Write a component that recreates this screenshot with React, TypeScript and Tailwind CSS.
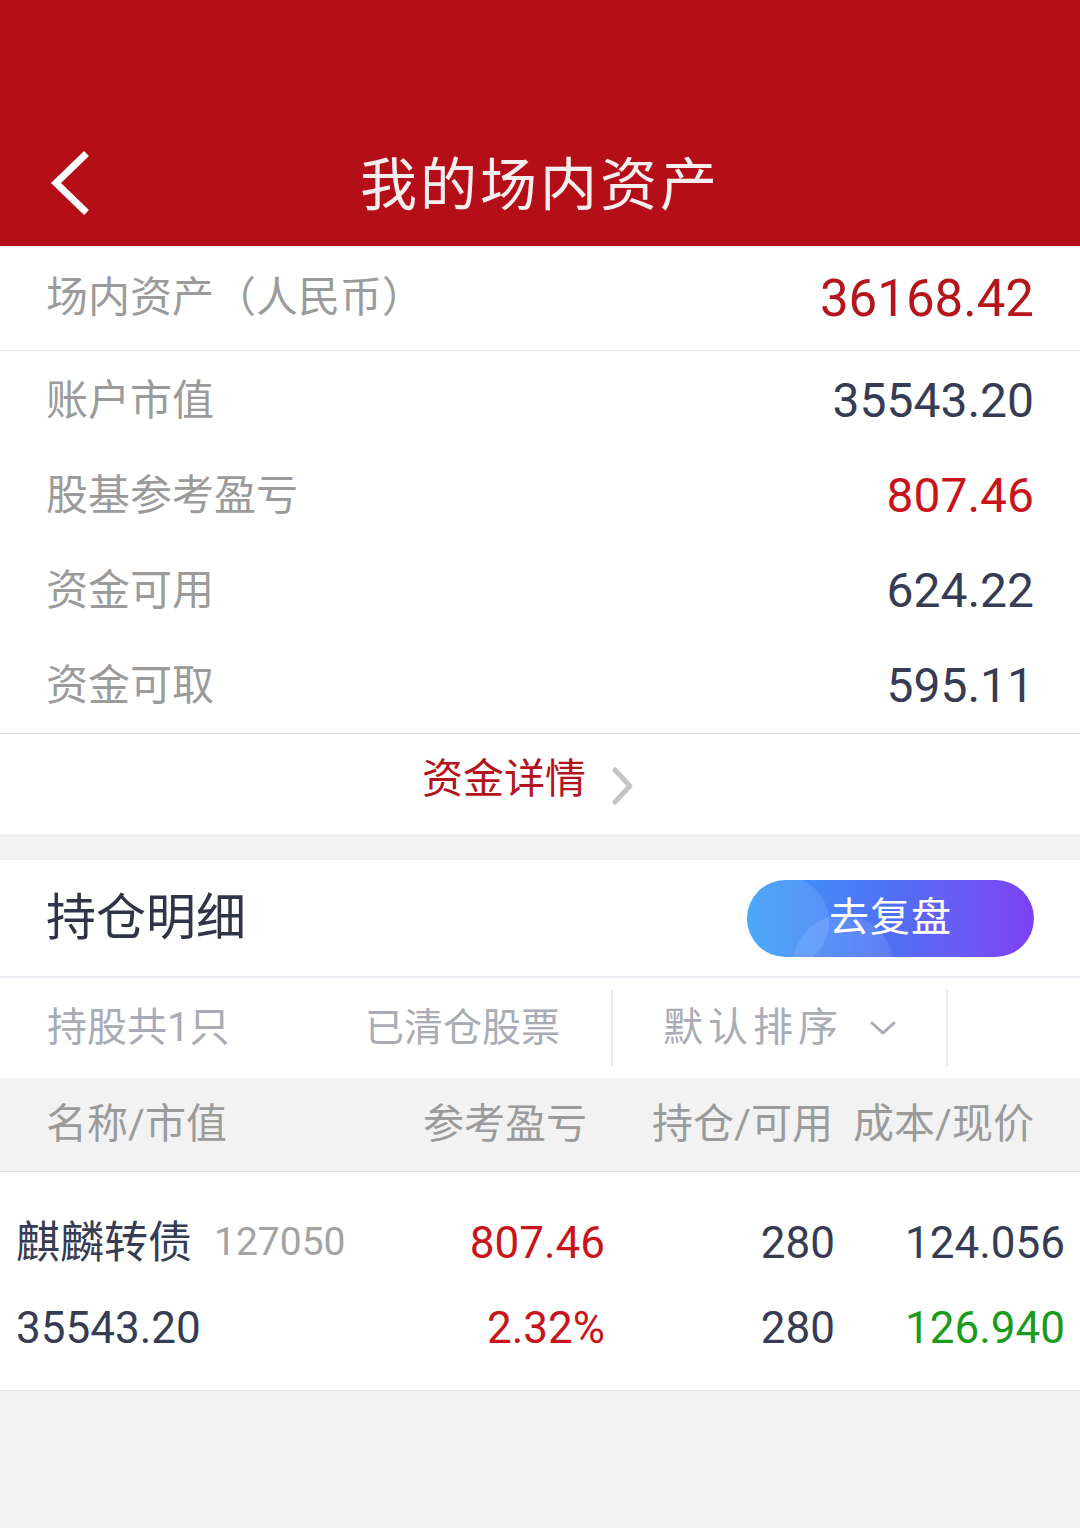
import React from "react";

const FONT = { fontFamily: "Roboto, 'Noto Sans CJK SC', 'Noto Sans', sans-serif" };

function InfoRow({ label, value, red }: { label: string; value: string; red?: boolean }) {
  return (
    <div className="flex h-[95px] items-center justify-between pl-[46px] pr-[46px]">
      <span className="text-[42px] leading-none text-[#9b9b9b]">{label}</span>
      <span className={`text-[48px] leading-none ${red ? "text-[#c8151b]" : "text-[#363c54]"}`}>{value}</span>
    </div>
  );
}

export default function App() {
  return (
    <div className="min-h-[1528px] w-[1080px] bg-[#f2f2f2]" style={FONT}>
      {/* Header */}
      <div className="relative flex h-[246px] items-center justify-center bg-[#b40f18] pt-[125px]">
        <svg className="absolute left-[44px] top-[150px]" width="50" height="66" viewBox="0 0 50 66">
          <path d="M40 6 L12 33 L40 60" fill="none" stroke="#ffffff" strokeWidth="7" strokeLinecap="square" />
        </svg>
        <span className="text-[57px] leading-none tracking-[3px] text-[#f7eeee]">我的场内资产</span>
      </div>

      {/* Assets */}
      <div className="bg-white">
        <div className="flex h-[105px] items-center justify-between border-b border-[#e3e3e3] px-[46px]">
          <span className="text-[42px] leading-none text-[#9b9b9b]">场内资产（人民币）</span>
          <span className="text-[51px] leading-none text-[#b5161c]">36168.42</span>
        </div>
        <div className="pt-[2px]">
          <InfoRow label="账户市值" value="35543.20" />
          <InfoRow label="股基参考盈亏" value="807.46" red />
          <InfoRow label="资金可用" value="624.22" />
          <InfoRow label="资金可取" value="595.11" />
        </div>
        <div className="flex h-[103px] items-center justify-center border-y border-[#e3e3e3] pb-[10px] pr-[22px]">
          <span className="text-[41px] leading-none text-[#b3141b]">资金详情</span>
          <svg className="ml-[24px] mt-[12px]" width="26" height="40" viewBox="0 0 26 40">
            <path d="M5 4 L20 20 L5 36" fill="none" stroke="#c4c4c6" strokeWidth="5" strokeLinecap="round" strokeLinejoin="round" />
          </svg>
        </div>
      </div>

      {/* Holdings */}
      <div className="mt-[24px] bg-white">
        <div className="flex h-[118px] items-center justify-between border-b-2 border-[#e8ebef] px-[46px]">
          <span className="text-[50px] leading-none text-[#2f3447]">持仓明细</span>
          <div className="relative flex h-[77px] w-[287px] items-center justify-center overflow-hidden rounded-full bg-gradient-to-r from-[#379ff8] via-[#4f6ff5] to-[#7d3ff3]">
            <div className="absolute left-[-10px] top-[-4px] h-[92px] w-[92px] rounded-full bg-white/10" />
            <div className="absolute left-[46px] top-[35px] h-[100px] w-[100px] rounded-full bg-white/10" />
            <span className="relative text-[40px] leading-none tracking-[1px] text-white">去复盘</span>
          </div>
        </div>

        <div className="flex h-[100px] items-center">
          <div className="flex w-[611px] items-center justify-between pl-[47px] pr-[51px]">
            <span className="text-[40px] leading-none text-[#a9acb6]">持股共1只</span>
            <span className="text-[39px] leading-none text-[#a9acb6]">已清仓股票</span>
          </div>
          <div className="h-[76px] w-[2px] bg-[#ebebeb]" />
          <div className="flex w-[333px] items-center pl-[50px]">
            <span className="text-[40px] leading-none tracking-[5px] text-[#a9acb6]">默认排序</span>
            <svg className="ml-[26px]" width="28" height="18" viewBox="0 0 28 18">
              <path d="M3 4 L14 14 L25 4" fill="none" stroke="#a9acb6" strokeWidth="3" strokeLinecap="round" strokeLinejoin="round" />
            </svg>
          </div>
          <div className="h-[76px] w-[2px] bg-[#ebebeb]" />
        </div>

        <div className="flex h-[94px] items-center border-b border-[#e3e3e3] bg-[#f2f2f2] px-[46px] text-[41px] leading-none text-[#9b9b9b]">
          <span className="flex-1">名称/市值</span>
          <span className="w-[240px] text-right">参考盈亏</span>
          <span className="w-[246px] text-right">持仓/可用</span>
          <span className="w-[201px] text-right">成本/现价</span>
        </div>

        <div className="border-b border-[#e3e3e3] pb-[20px] pt-[28px]">
          <div className="flex h-[85px] items-center pl-[16px] pr-[15px] text-[44px] leading-none text-[#363c54]">
            <span className="flex flex-1 items-center">
              <span className="text-[44px]">麒麟转债</span>
              <span className="ml-[22px] text-[39px] text-[#a3a3a3]">127050</span>
            </span>
            <span className="w-[200px] text-right text-[#c8151b]">807.46</span>
            <span className="w-[230px] text-right">280</span>
            <span className="w-[230px] text-right">124.056</span>
          </div>
          <div className="flex h-[85px] items-center pl-[16px] pr-[15px] text-[44px] leading-none text-[#363c54]">
            <span className="flex-1">35543.20</span>
            <span className="w-[200px] text-right text-[#c8151b]">2.32%</span>
            <span className="w-[230px] text-right">280</span>
            <span className="w-[230px] text-right text-[#1b9b1b]">126.940</span>
          </div>
        </div>
      </div>
    </div>
  );
}
